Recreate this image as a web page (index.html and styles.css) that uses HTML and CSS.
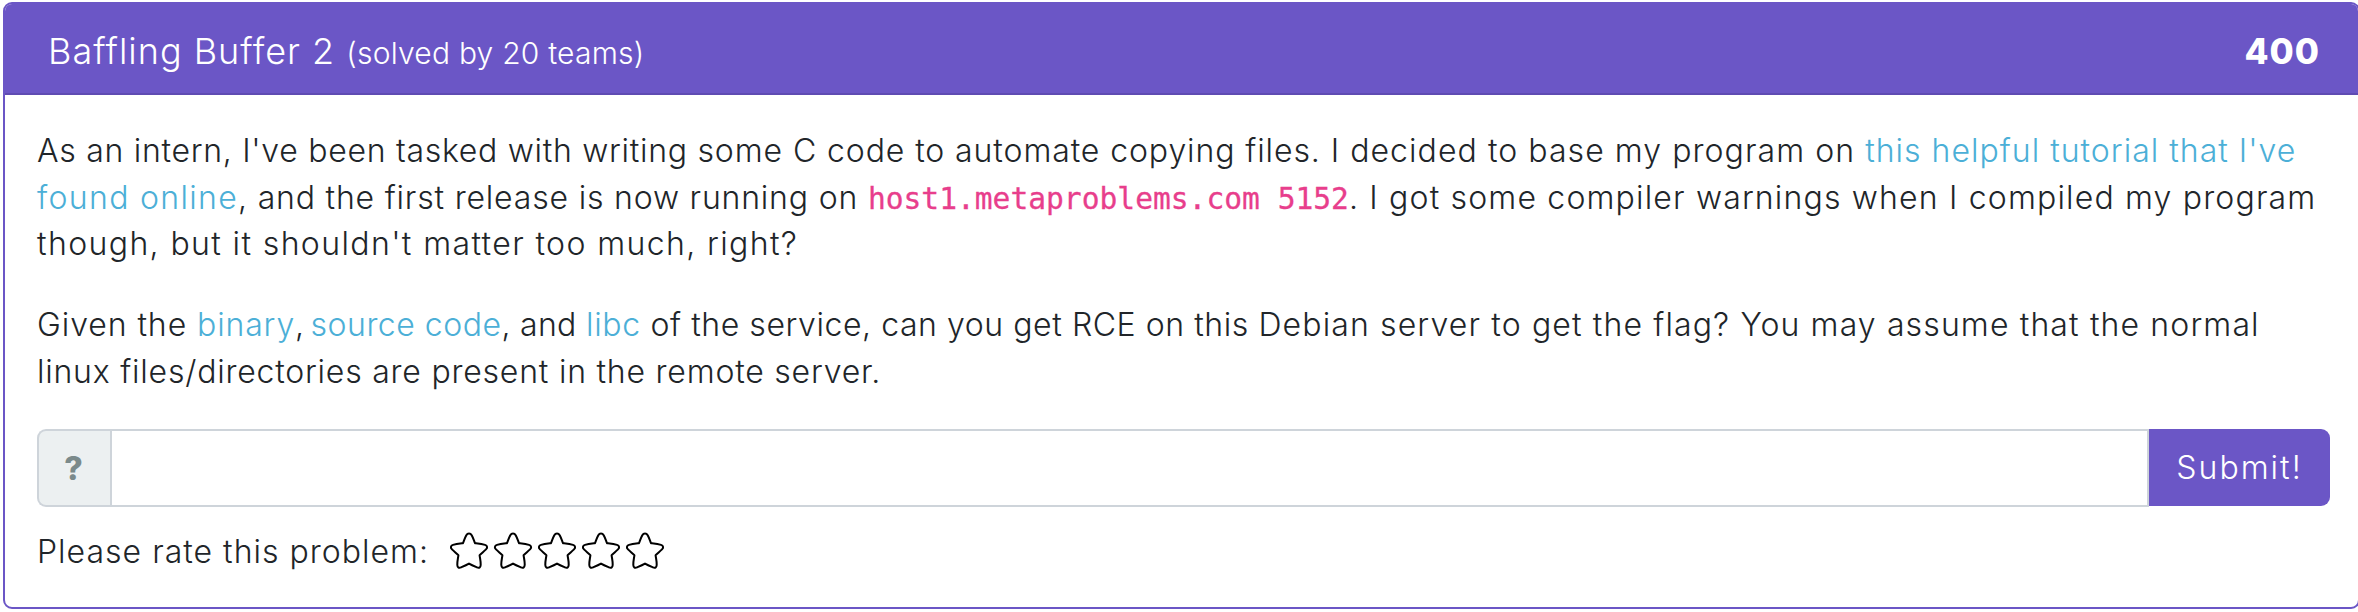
FILE: index.html
```html
<!DOCTYPE html>
<html lang="en">
<head>
<meta charset="utf-8">
<title>Baffling Buffer 2</title>
<link rel="stylesheet" href="styles.css">
</head>
<body>
<svg class="defs" width="0" height="0" aria-hidden="true">
  <symbol id="star" viewBox="0 0 40 40">
    <path d="M20 2.4C21.2 2.4 22 3 22.7 4.3C24.2 7 24.8 9.2 26 12.2C29.5 12.6 32.8 12.9 36 13.9C38.5 14.7 38.7 16.7 37 18.4C34.9 20.5 33 22 30.6 24.3C31 27.5 31.9 30.6 31.7 34C31.6 36.6 29.9 37.3 28 36.4C25.2 35.2 22.8 34.2 20 32.6C17.2 34.2 14.8 35.2 12 36.4C10.1 37.3 8.4 36.6 8.3 34C8.1 30.6 9 27.5 9.4 24.3C7 22 5.1 20.5 3 18.4C1.3 16.7 1.5 14.7 4 13.9C7.2 12.9 10.5 12.6 14 12.2C15.2 9.2 15.8 7 17.3 4.3C18 3 18.8 2.4 20 2.4Z"/>
  </symbol>
</svg>
<main class="card">
  <header class="card-header">
    <h1 class="title"><span class="name">Baffling Buffer 2 </span><small class="solved">(solved by 20 teams)</small></h1>
    <strong class="points">400</strong>
  </header>
  <div class="card-body">
    <p class="text">
      <span class="line"><span class="t1a">As an intern, I've been tasked with writing </span><span class="t1b">some C code to automate copying files. </span><span class="t1c">I decided to base my program on </span><a class="t2">this helpful tutorial that I've</a></span>
      <span class="line"><a class="t3">found online</a><span class="t4">, and the first release is now running on </span><code>host1.metaproblems.com 5152</code><span class="t5">. I got some compiler warnings when I compiled my program</span></span>
      <span class="line t6">though, but it shouldn't matter too much, right?</span>
    </p>
    <p class="text">
      <span class="line"><span class="t7">Given the </span><a class="t8">binary</a><span class="t9">, </span><a class="t10">source code</a><span class="t11">, and </span><a class="t12">libc</a><span class="t13a"> of the service, can you get RCE on this </span><span class="t13b">Debian server to get the flag? You may assume that the normal</span></span>
      <span class="line t14">linux files/directories are present in the remote server.</span>
    </p>
    <form class="group">
      <span class="prefix">?</span>
      <input class="field" type="text" aria-label="Flag">
      <button class="submit" type="button">Submit!</button>
    </form>
    <div class="rating">
      <span class="rate-label">Please rate this problem:</span>
      <span class="stars">
        <svg><use href="#star"/></svg><svg><use href="#star"/></svg><svg><use href="#star"/></svg><svg><use href="#star"/></svg><svg><use href="#star"/></svg>
      </span>
    </div>
  </div>
</main>
</body>
</html>
```
FILE: styles.css
```css
* { box-sizing: border-box; }
html { overflow: hidden; background: #fff; }
body {
  margin: 0;
  padding: 1.5px 0 0 3px;
  font: 300 32px/46.5px Inter, "Open Sans", sans-serif;
  color: #212529;
}
.defs { display: block; width: 0; height: 0; }
.card {
  width: 2357px;
  height: 607px;
  border: 2px solid #6b56c6;
  border-radius: 9px;
  overflow: hidden;
}
.card-header {
  display: flex;
  justify-content: space-between;
  align-items: center;
  height: 91.5px;
  padding: 7px 38px 0 43px;
  background: #6b56c6;
  border-bottom: 2px solid #5f4bb2;
  color: #fff;
}
.title { margin: 0; font-size: 36px; font-weight: 300; line-height: 54px; white-space: pre; }
.name { letter-spacing: 1px; }
.solved { font-size: 30px; letter-spacing: 0.22px; }
.points { font-size: 35px; font-weight: 800; line-height: 54px; letter-spacing: 1px; padding-bottom: 2px; }
.card-body { padding: 33px 27px 0 32px; }
.text { margin: 0 0 34.5px; }
.text + .group { margin-top: -1px; }
.line { display: block; white-space: pre; height: 46.5px; }
a { color: #4cafd7; }
code {
  font: 29.6px/1 "DejaVu Sans Mono", monospace;
  color: #e83e8c;
  -webkit-text-stroke: 0.3px #e83e8c;
}
.t1a { letter-spacing: 0.71px; }
.t1b { letter-spacing: 0.9px; }
.t1c { letter-spacing: 1.06px; }
.t2 { letter-spacing: 1.01px; }
.t3 { letter-spacing: 1.31px; }
.t4 { letter-spacing: 0.81px; }
.t5 { letter-spacing: 1.17px; }
.t6 { letter-spacing: 1.38px; }
.t7 { letter-spacing: 0.93px; }
.t8 { letter-spacing: 0.85px; }
.t9 { letter-spacing: -1.3px; }
.t10 { letter-spacing: 0.5px; }
.t11 { letter-spacing: 0.3px; }
.t12 { letter-spacing: 0.72px; }
.t13a { letter-spacing: 0.56px; }
.t13b { letter-spacing: 1.13px; }
.t14 { letter-spacing: 0.78px; }
.group { display: flex; width: 2293px; height: 78px; }
.prefix {
  display: flex;
  align-items: center;
  justify-content: center;
  width: 73px;
  padding: 3px 2px 0 0;
  border: 2px solid #ced4da;
  border-right: 0;
  border-radius: 9px 0 0 9px;
  background: #ecf0f1;
  color: #7b8a8b;
  font-weight: 800;
}
.field {
  flex: 1;
  min-width: 0;
  border: 2px solid #ced4da;
  border-radius: 0;
  background: #fff;
  outline: 0;
}
.submit {
  width: 181px;
  height: 77px;
  padding: 2px 0 0;
  border: 0;
  border-radius: 0 9px 9px 0;
  background: #6b56c6;
  color: #fff;
  font: inherit;
  letter-spacing: 2px;
}
.rating { display: flex; align-items: center; margin-top: 21px; }
.rate-label { width: 412px; padding-top: 1px; letter-spacing: 1.01px; white-space: nowrap; }
.stars { display: flex; gap: 4px; }
.stars svg { width: 40px; height: 40px; fill: none; stroke: #000; stroke-width: 2; stroke-linejoin: round; }
```
